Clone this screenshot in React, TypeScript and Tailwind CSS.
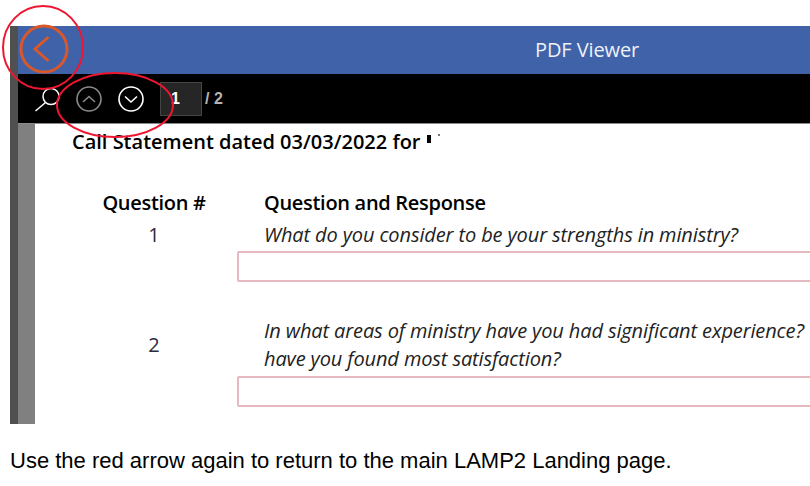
function BackButton() {
  return (
    <svg width="52" height="52" viewBox="0 0 52 52" fill="none" className="shrink-0">
      <circle cx="25" cy="25" r="23" stroke="#d9582b" strokeWidth="3" />
      <path d="M29.5 13 L16 25 L29.5 37" stroke="#d9582b" strokeWidth="3" />
    </svg>
  );
}

function SearchIcon() {
  return (
    <svg width="28" height="28" viewBox="0 0 28 28" fill="none" className="shrink-0">
      <circle cx="17" cy="11.5" r="8" stroke="white" strokeWidth="1.5" />
      <path d="M11.5 17.5 L1.5 26" stroke="white" strokeWidth="1.5" />
    </svg>
  );
}

function PageArrow({ up, dim }: { up?: boolean; dim?: boolean }) {
  const color = dim ? "#8a8a8a" : "#ffffff";
  return (
    <svg width="26" height="26" viewBox="0 0 26 26" fill="none" className="shrink-0">
      <circle cx="13" cy="13" r="12" stroke={color} strokeWidth="1.6" />
      <path d={up ? "M7 16 L13 10.5 L19 16" : "M7 10.5 L13 16 L19 10.5"} stroke={color} strokeWidth="1.6" />
    </svg>
  );
}

function Annotations() {
  return (
    <svg width="810" height="486" viewBox="0 0 810 486" fill="none" className="absolute left-0 top-0 pointer-events-none">
      <ellipse cx="43" cy="47.5" rx="40" ry="41.5" stroke="#ee1630" strokeWidth="2" />
      <ellipse cx="115" cy="105" rx="58" ry="32" stroke="#ee1630" strokeWidth="2" />
    </svg>
  );
}

export default function App() {
  return (
    <div className="relative h-[486px] w-[810px] overflow-hidden bg-white font-['Open_Sans',sans-serif]">
      <div className="flex pl-[10px] pt-[26px]">
        <div className="h-[398px] w-2 shrink-0 bg-[#505050]" />
        <div className="min-w-0 flex-1">
          <div className="relative flex h-[48px] items-center bg-[#4062a8] pl-[1px]">
            <BackButton />
            <span className="absolute left-[517px] top-[10px] text-[20px] leading-[27px] tracking-[-0.1px] text-[#eef1f8]">PDF Viewer</span>
          </div>
          <div className="flex h-[50px] items-center border-b border-[#8c8c8c] bg-black pl-[16px] pt-[1px]">
            <SearchIcon />
            <div className="ml-[14px] flex items-center gap-[16px]">
              <PageArrow up dim />
              <PageArrow />
            </div>
            <div className="ml-[16px] flex h-[34px] w-[42px] items-center border border-[#444444] bg-[#262626] pl-[10px] font-['Liberation_Sans',sans-serif] text-[16px] font-bold text-white">1</div>
            <span className="ml-[3px] font-['Liberation_Sans',sans-serif] text-[16px] font-bold text-[#b4b4b4]">/ 2</span>
          </div>
          <div className="flex h-[300px]">
            <div className="w-[17px] shrink-0 bg-[#808080]" />
            <div className="min-w-0 flex-1 overflow-hidden text-[#111111]">
              <div className="flex items-center pl-[37px] pt-[6px]">
                <span className="whitespace-nowrap text-[20px] font-semibold leading-[24px] text-black">Call Statement dated 03/03/2022 for</span>
                <span className="mb-[6px] ml-[7px] h-[8px] w-[4px] bg-black" />
                <span className="mb-[14px] ml-[7px] h-[2px] w-[2px] bg-[#777777]" />
              </div>
              <div className="mt-[37px] grid grid-cols-[229px_1fr]">
                <div className="flex flex-col items-center pl-[9px]">
                  <span className="whitespace-nowrap text-[20px] font-semibold leading-[24px] tracking-[-0.3px] text-black">Question #</span>
                  <span className="mt-[8px] text-[20px] leading-[24px] text-[#2b2b3a]">1</span>
                </div>
                <div className="min-w-0">
                  <div className="whitespace-nowrap text-[20px] font-semibold leading-[24px] tracking-[-0.3px] text-black">Question and Response</div>
                  <div className="mt-[8px] whitespace-nowrap text-[20px] italic leading-[24px] tracking-[-0.12px] text-[#222222]">What do you consider to be your strengths in ministry?</div>
                  <div className="-ml-[27px] mt-[4px] h-[31px] w-[600px] rounded-[2px] border-2 border-[#e6b8bf]" />
                </div>
              </div>
              <div className="mt-[35px] grid grid-cols-[229px_1fr]">
                <div className="flex items-center justify-center pl-[9px]">
                  <span className="text-[20px] leading-[24px] text-[#2b2b3a]">2</span>
                </div>
                <div className="min-w-0 whitespace-nowrap text-[20px] italic leading-[28px] tracking-[-0.12px] text-[#222222]">
                  <div>In what areas of ministry have you had significant experience?</div>
                  <div>have you found most satisfaction?</div>
                </div>
              </div>
              <div className="ml-[202px] mt-[3px] h-[31px] w-[600px] rounded-[2px] border-2 border-[#e6b8bf]" />
            </div>
          </div>
        </div>
      </div>
      <p className="ml-[10px] mt-[25px] whitespace-nowrap font-['Liberation_Sans',sans-serif] text-[22px] leading-[24px] text-black">
        Use the red arrow again to return to the main LAMP2 Landing page.
      </p>
      <Annotations />
    </div>
  );
}
